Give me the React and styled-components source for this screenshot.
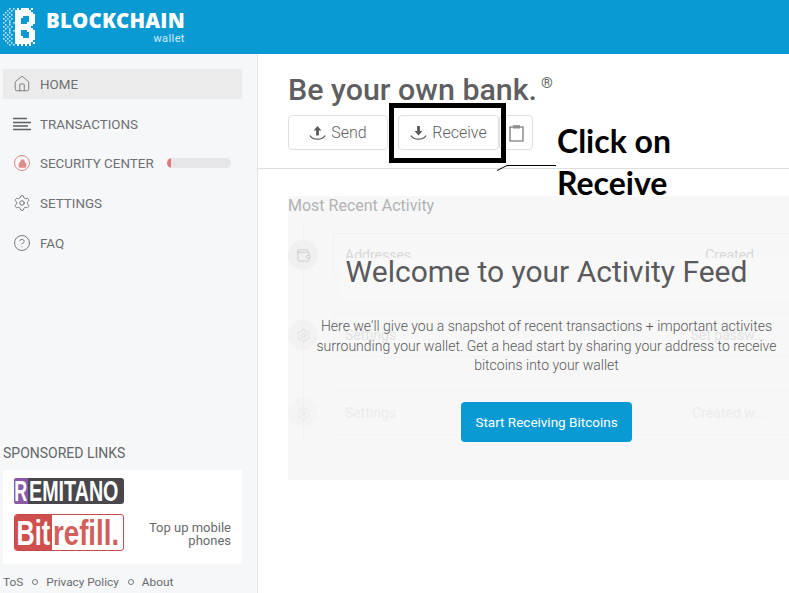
import React from "react"
import styled, { createGlobalStyle } from "styled-components"
import { Home, Settings, CircleHelp, Lock, Wallet } from "lucide-react"

const GlobalStyle = createGlobalStyle`
  html, body {
    margin: 0;
    padding: 0;
    background: #fff;
    font-family: Roboto, "Liberation Sans", sans-serif;
  }
`

const Page = styled.div`
  width: 789px;
  height: 593px;
  overflow: hidden;
  position: relative;
  display: flex;
  flex-direction: column;
  background: #fff;
`

const Header = styled.header`
  height: 54px;
  flex: none;
  background: #0a9ad3;
  display: flex;
  align-items: center;
  padding-left: 3px;
  gap: 11px;
`

const Brand = styled.div`
  display: flex;
  flex-direction: column;
  align-items: flex-end;
  color: #fff;
`

const BrandName = styled.div`
  font-family: "Open Sans", sans-serif;
  font-weight: 800;
  font-size: 20.4px;
  line-height: 21px;
  letter-spacing: 0.2px;
`

const BrandSub = styled.div`
  font-size: 11px;
  line-height: 11px;
  letter-spacing: 0.4px;
  margin-top: 2px;
  color: #d5eef8;
`

const Body = styled.div`
  flex: 1;
  min-height: 0;
  display: flex;
`

const Sidebar = styled.aside`
  width: 258px;
  flex: none;
  background: #f5f7f9;
  border-right: 1px solid #e2e2e2;
  display: flex;
  flex-direction: column;
  padding: 15px 15px 0 3px;
  box-sizing: border-box;
`

const Nav = styled.nav`
  display: flex;
  flex-direction: column;
  flex: 1;
`

const NavItem = styled.div`
  height: 30px;
  margin-bottom: ${(p) => p.$gap || 10}px;
  display: flex;
  align-items: center;
  padding-left: 10px;
  gap: 9px;
  color: #6f6f72;
  font-size: 13.4px;
  background: ${(p) => (p.$active ? "#ebebeb" : "transparent")};
`

const IconSlot = styled.span`
  width: 18px;
  height: 18px;
  display: flex;
  align-items: center;
  justify-content: center;
  flex: none;
  color: #6c6c70;
`

const LockRing = styled.span`
  width: 16px;
  height: 16px;
  flex: none;
  box-sizing: border-box;
  border: 1.5px solid #e08a8a;
  border-radius: 50%;
  display: flex;
  align-items: center;
  justify-content: center;
  color: #e08a8a;
`

const Progress = styled.div`
  width: 64px;
  height: 10px;
  margin-left: 4px;
  border-radius: 5px;
  background: #e6e6e8;
  overflow: hidden;
`

const ProgressFill = styled.div`
  height: 100%;
  background: #e0787c;
`

const SponsorTitle = styled.div`
  font-size: 14px;
  color: #66666a;
  line-height: 16px;
  margin-bottom: 9px;
`

const SponsorBox = styled.div`
  background: #fff;
  height: 94px;
  margin-bottom: 7px;
  padding: 8px 11px 0 11px;
  box-sizing: border-box;
  display: flex;
  justify-content: space-between;
`

const Logos = styled.div`
  display: flex;
  flex-direction: column;
  gap: 10px;
`

const Remitano = styled.div`
  width: 110px;
  height: 26px;
  background: #47474c;
  border-radius: 3px;
  display: flex;
  align-items: center;
  color: #fff;
  font-family: "Liberation Sans", sans-serif;
  font-weight: 700;
  font-size: 29px;
  line-height: 26px;
`

const RemitanoR = styled.span`
  width: 14px;
  height: 100%;
  flex: none;
  background: #8a5aa8;
  border-radius: 3px 0 0 3px;
  display: block;
`

const SqueezedR = styled.span`
  display: inline-block;
  transform: scaleX(0.62);
  transform-origin: left center;
  margin-right: -9px;
  padding-left: 0.5px;
`

const RemitanoRest = styled.span`
  display: inline-block;
  white-space: nowrap;
  transform: scaleX(0.68);
  transform-origin: left center;
  margin-left: 1px;
  margin-right: -42px;
`

const Bitrefill = styled.div`
  width: 110px;
  height: 37px;
  box-sizing: border-box;
  border: 1px solid #c74a4a;
  border-radius: 3px;
  display: flex;
  font-family: "Liberation Sans", sans-serif;
  font-weight: 700;
  font-size: 35px;
  line-height: 35px;
`

const BitPart = styled.span`
  background: #cf4f4f;
  color: #fff;
  width: 37px;
  flex: none;
  display: block;
  border-radius: 2px 0 0 2px;
`

const SqueezedBit = styled.span`
  display: inline-block;
  transform: scaleX(0.72);
  transform-origin: left center;
  margin-right: -13px;
  padding-left: 2px;
`

const RefillPart = styled.span`
  color: #d25e5e;
  display: inline-block;
  white-space: nowrap;
  transform: scaleX(0.79);
  transform-origin: left center;
  margin-left: 1px;
  margin-right: -18px;
`

const TopUp = styled.div`
  align-self: flex-end;
  text-align: right;
  color: #6a6a6e;
  font-size: 13px;
  line-height: 13px;
  margin-bottom: 17px;
`

const FooterLinks = styled.div`
  display: flex;
  align-items: center;
  height: 22px;
  color: #6a6a6e;
  font-size: 11.8px;
  white-space: nowrap;
`

const Dot = styled.span`
  width: 6px;
  height: 6px;
  border: 1px solid #77777a;
  border-radius: 50%;
  box-sizing: border-box;
  margin: 0 8px 0 9px;
`

const Main = styled.main`
  flex: 1;
  min-width: 0;
  display: flex;
  flex-direction: column;
`

const TopBlock = styled.div`
  height: 115px;
  flex: none;
  box-sizing: border-box;
  border-bottom: 1px solid #dedede;
  padding: 17px 0 0 30px;
`

const Title = styled.h1`
  margin: 0;
  font-size: 30.4px;
  line-height: 37px;
  font-weight: 500;
  color: #5f5f62;
  white-space: nowrap;
`

const Reg = styled.sup`
  font-size: 15px;
  font-weight: 400;
  line-height: 0;
  vertical-align: 12px;
  margin-left: 4px;
`

const ButtonRow = styled.div`
  display: flex;
  margin-top: 7px;
`

const Button = styled.div`
  height: 35px;
  width: ${(p) => p.$w}px;
  margin-right: ${(p) => p.$mr || 0}px;
  box-sizing: border-box;
  border: 1px solid #dfdfdf;
  border-radius: 4px;
  display: flex;
  align-items: center;
  justify-content: center;
  gap: 5px;
  color: #5f5f62;
  font-size: 16px;
  font-weight: 300;
  background: #fff;
`

const FeedArea = styled.section`
  padding: 27px 0 0 30px;
  position: relative;
`

const FeedTitle = styled.div`
  font-size: 16px;
  line-height: 20px;
  color: #b2b2b4;
  position: relative;
  z-index: 1;
`

const FeedPanel = styled.div`
  margin-top: -20px;
  height: 284px;
  background: #f7f7f7;
  position: relative;
  padding: 37px 0 0 0;
  box-sizing: border-box;
  overflow: hidden;

  &::before {
    content: "";
    position: absolute;
    left: 15px;
    top: 30px;
    bottom: 40px;
    width: 1px;
    background: #f1f1f1;
  }
`

const GhostRow = styled.div`
  display: flex;
  align-items: center;
  height: 44px;
  position: relative;
  margin-bottom: ${(p) => p.$mb}px;
  opacity: ${(p) => p.$fade};
`

const GhostIcon = styled.span`
  width: 30px;
  height: 30px;
  flex: none;
  border-radius: 50%;
  background: #f0f0f0;
  color: #c8c8c8;
  display: flex;
  align-items: center;
  justify-content: center;
`

const GhostCard = styled.div`
  margin-left: 15px;
  flex: 1;
  height: 42px;
  border: 1px solid #f1f1f1;
  border-right: none;
  display: flex;
  justify-content: space-between;
  padding: 0 24px 0 11px;
  font-size: 14px;
  line-height: 42px;
  color: #d8d8d8;
`

const Overlay = styled.div`
  position: absolute;
  left: 16px;
  right: 0;
  top: 54px;
  z-index: 1;
  text-align: center;
  display: flex;
  flex-direction: column;
  align-items: center;

  &::before {
    content: "";
    position: absolute;
    left: 36px;
    right: 0;
    top: 8px;
    height: 42px;
    background: #f8f8f8;
    z-index: -1;
  }
`

const OverlayTitle = styled.h2`
  margin: 0;
  font-size: 30px;
  line-height: 44px;
  font-weight: 400;
  color: #5a5a5d;
  white-space: nowrap;
`

const OverlayText = styled.p`
  margin: 23px 0 0;
  width: 480px;
  font-size: 14px;
  line-height: 19.5px;
  font-weight: 300;
  color: #59595c;
`

const CtaButton = styled.div`
  margin-top: 26px;
  width: 171px;
  height: 40px;
  border-radius: 4px;
  background: #0a9ad3;
  color: #fff;
  display: flex;
  align-items: center;
  justify-content: center;
  font-size: 13.5px;
`

const HighlightBox = styled.div`
  position: absolute;
  left: 389px;
  top: 103px;
  width: 117px;
  height: 60px;
  box-sizing: border-box;
  border: 5px solid #000;
`

const Callout = styled.div`
  position: absolute;
  left: 557px;
  top: 120px;
  font-family: Lato, "Open Sans", sans-serif;
  font-weight: 700;
  font-size: 32px;
  line-height: 42px;
  color: #000;
`

const Leader = styled.svg`
  position: absolute;
  left: 495px;
  top: 162px;
`

// the cube logo on a 16x19 grid, scattered on the left and solid for the B
const LOGO = [
  "...x.x.x.xxxx.x.",
  "..x.x.xxxxxxxx..",
  ".x.x..xxxxxxxxx.",
  "x.x.x.xxxxxxxxxx",
  ".x.x..xxxx...xxx",
  "x.x.x.xxx....xxx",
  ".x.x..xxx....xxx",
  "x..x.xxxx...xxxx",
  ".x.x..xxxxxxxxx.",
  "x.x.x.xxxxxxxx..",
  ".x.x..xxxxxxxxx.",
  "x..x.xxxx...xxxx",
  ".x.x..xxx....xxx",
  "x.x.x.xxx....xxx",
  ".x.x..xxxx...xxx",
  "x.x.x.xxxxxxxxxx",
  ".x.x..xxxxxxxxx.",
  "..x.x.xxxxxxxx.x",
  "...x.x.x.x.x.x..",
]

const LogoMark = () => (
  <svg width="32" height="38" viewBox="0 0 32 38">
    {LOGO.flatMap((row, y) =>
      row.split("").map((c, x) =>
        c === "x" ? (
          <rect
            key={`${x}-${y}`}
            x={x * 2}
            y={y * 2}
            width={x < 6 ? 1.6 : 2}
            height={x < 6 ? 1.6 : 2}
            fill="#fff"
            opacity={x < 6 ? 0.75 : 1}
          />
        ) : null
      )
    )}
  </svg>
)

const LinesIcon = () => (
  <svg width="18" height="14" viewBox="0 0 18 14" fill="none" stroke="#5f5f62" strokeWidth="1.3">
    <path d="M0 1.5h14M0 5.5h18M0 9h15M0 12.5h18" />
  </svg>
)

const ArrowTray = ({ up }) => (
  <svg width="17" height="15" viewBox="0 0 17 15" fill="none">
    <path d="M1 10.5c1.5 3 4 3.7 7.5 3.7s6-.7 7.5-3.7" stroke="#5a5a5d" strokeWidth="1.3" />
    <path
      d={up ? "M8.5 1 4.6 5.4h2.5v5h2.8v-5h2.5z" : "M7.1 1h2.8v5h2.5L8.5 10.4 4.6 6h2.5z"}
      fill="#5a5a5d"
    />
  </svg>
)

const ClipIcon = () => (
  <svg width="15" height="18" viewBox="0 0 15 18" fill="none" stroke="#5f5f62" strokeWidth="1.1">
    <path d="M4 3H1v14h13V3h-3" />
    <path d="M4 1.2h7v3.3H4z" fill="#8a8a8d" stroke="none" />
  </svg>
)

const App = () => (
  <Page>
    <GlobalStyle />
    <Header>
      <LogoMark />
      <Brand>
        <BrandName>BLOCKCHAIN</BrandName>
        <BrandSub>wallet</BrandSub>
      </Brand>
    </Header>
    <Body>
      <Sidebar>
        <Nav>
          <NavItem $active>
            <IconSlot><Home size={20} strokeWidth={1.1} /></IconSlot>
            HOME
          </NavItem>
          <NavItem $gap={9}>
            <IconSlot><LinesIcon /></IconSlot>
            TRANSACTIONS
          </NavItem>
          <NavItem>
            <IconSlot>
              <LockRing><Lock size={9} strokeWidth={2.4} fill="#e08a8a" /></LockRing>
            </IconSlot>
            SECURITY CENTER
            <Progress><ProgressFill style={{ width: "6%" }} /></Progress>
          </NavItem>
          <NavItem>
            <IconSlot><Settings size={18} strokeWidth={1.2} /></IconSlot>
            SETTINGS
          </NavItem>
          <NavItem>
            <IconSlot><CircleHelp size={18} strokeWidth={1.2} /></IconSlot>
            FAQ
          </NavItem>
        </Nav>
        <SponsorTitle>SPONSORED LINKS</SponsorTitle>
        <SponsorBox>
          <Logos>
            <Remitano>
              <RemitanoR><SqueezedR>R</SqueezedR></RemitanoR>
              <RemitanoRest>EMITANO</RemitanoRest>
            </Remitano>
            <Bitrefill>
              <BitPart><SqueezedBit>Bit</SqueezedBit></BitPart>
              <RefillPart>refill.</RefillPart>
            </Bitrefill>
          </Logos>
          <TopUp>Top up mobile<br />phones</TopUp>
        </SponsorBox>
        <FooterLinks>
          ToS<Dot />Privacy Policy<Dot />About
        </FooterLinks>
      </Sidebar>
      <Main>
        <TopBlock>
          <Title>Be your own bank.<Reg>®</Reg></Title>
          <ButtonRow>
            <Button $w={100} $mr={10}><ArrowTray up /> Send</Button>
            <Button $w={101}><ArrowTray /> Receive</Button>
            <Button $w={34}><ClipIcon /></Button>
          </ButtonRow>
        </TopBlock>
        <FeedArea>
          <FeedTitle>Most Recent Activity</FeedTitle>
          <FeedPanel>
            <GhostRow $mb={36} $fade={1}>
              <GhostIcon><Wallet size={15} strokeWidth={1.3} /></GhostIcon>
              <GhostCard><span>Addresses</span><span>Created...</span></GhostCard>
            </GhostRow>
            <GhostRow $mb={34} $fade={0.6}>
              <GhostIcon><Settings size={15} strokeWidth={1.3} /></GhostIcon>
              <GhostCard><span>Settings</span><span>Set passw...</span></GhostCard>
            </GhostRow>
            <GhostRow $mb={0} $fade={0.35}>
              <GhostIcon><Settings size={15} strokeWidth={1.3} /></GhostIcon>
              <GhostCard><span>Settings</span><span>Created w...</span></GhostCard>
            </GhostRow>
            <Overlay>
              <OverlayTitle>Welcome to your Activity Feed</OverlayTitle>
              <OverlayText>
                Here we'll give you a snapshot of recent transactions + important activites
                surrounding your wallet. Get a head start by sharing your address to receive
                bitcoins into your wallet
              </OverlayText>
              <CtaButton>Start Receiving Bitcoins</CtaButton>
            </Overlay>
          </FeedPanel>
        </FeedArea>
      </Main>
    </Body>
    <HighlightBox />
    <Leader width="62" height="10" viewBox="0 0 62 10" fill="none" stroke="#000" strokeWidth="1">
      <path d="M2 8.5 12 3.5H61" />
    </Leader>
    <Callout>Click on<br />Receive</Callout>
  </Page>
)

export default App
